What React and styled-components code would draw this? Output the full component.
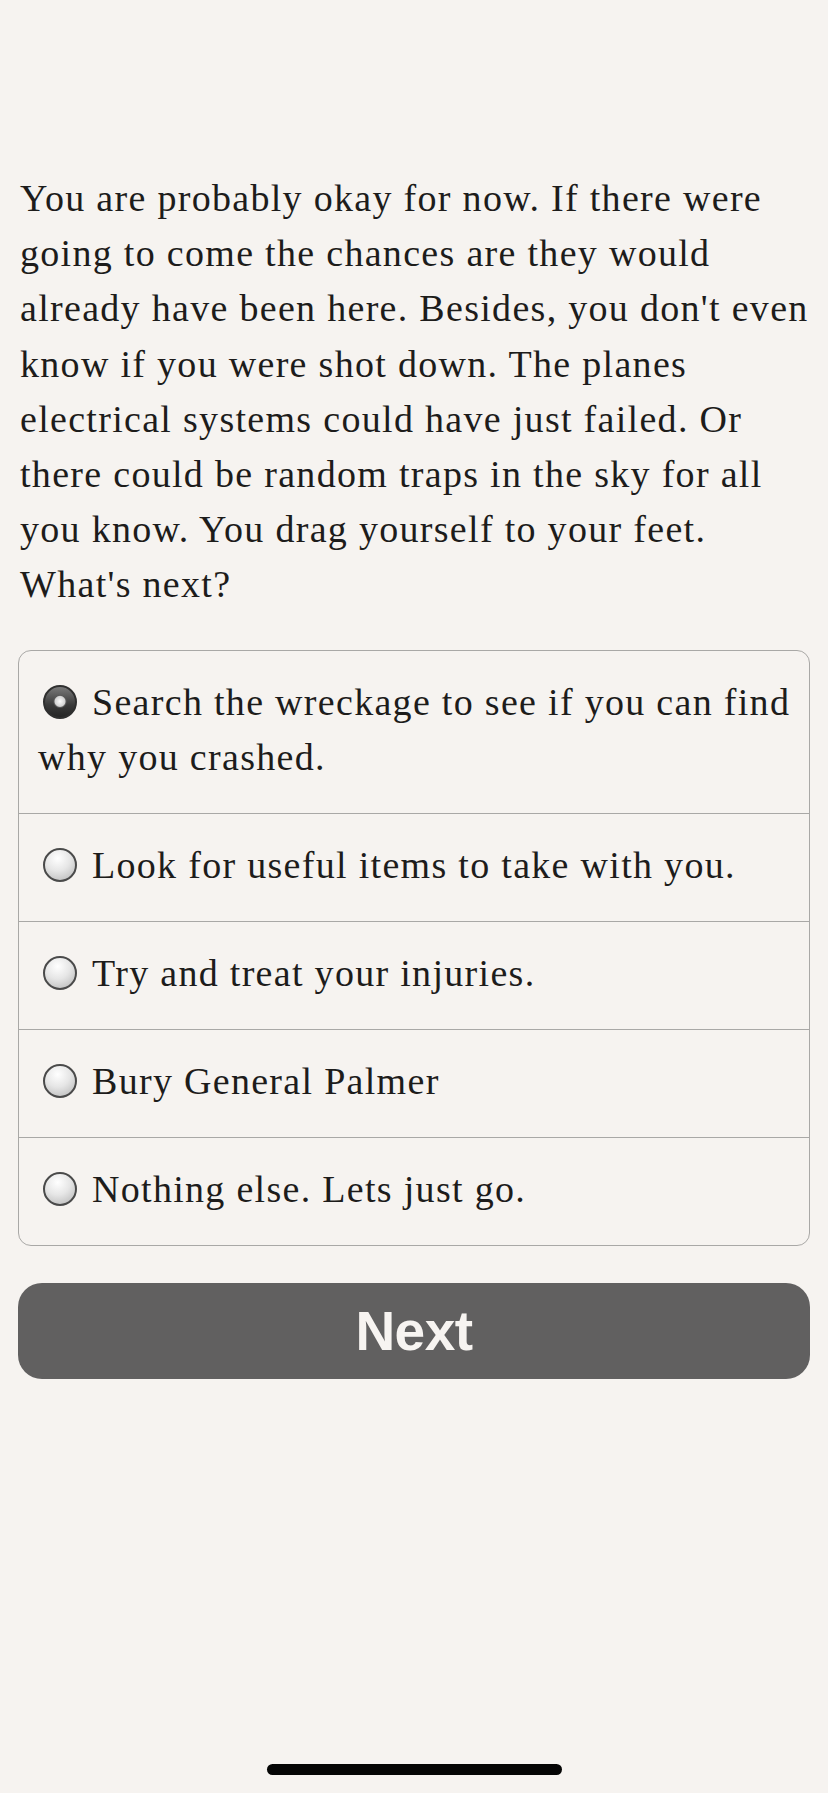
import React from "react";
import styled, { createGlobalStyle } from "styled-components";

const GlobalStyle = createGlobalStyle`
  html, body {
    margin: 0;
    padding: 0;
    background: #f6f3f0;
  }
  * { box-sizing: border-box; }
`;

const Screen = styled.div`
  min-height: 1793px;
  display: flex;
  flex-direction: column;
  padding: 0 18px;
  background: #f6f3f0;
  color: #1d1c1b;
  font-family: "Liberation Serif", "Times New Roman", serif;
`;

const Story = styled.p`
  margin: 171px 0 0 2px;
  font-size: 38px;
  line-height: 55.2px;
  letter-spacing: 1.3px;
`;

const Choices = styled.div`
  margin-top: 37px;
  border: 1.5px solid #a9a8a6;
  border-radius: 13px;
  overflow: hidden;
`;

const Choice = styled.label`
  display: block;
  padding: 24px 6px 28px 19px;
  font-size: 38px;
  line-height: 55px;
  letter-spacing: 1.3px;
  border-top: ${(p) => (p.$first ? "none" : "1.5px solid #a9a8a6")};
  cursor: pointer;
`;

const Radio = styled.input.attrs({ type: "radio" })`
  appearance: none;
  -webkit-appearance: none;
  display: inline-block;
  width: 34px;
  height: 34px;
  margin: 0 15px 0 5px;
  vertical-align: -4px;
  border-radius: 50%;
  border: 2px solid #4a4a4a;
  background: radial-gradient(circle at 42% 28%, #ffffff 0%, #e6e6e6 45%, #b3b3b3 100%);

  &:checked {
    border-color: #2f2f2f;
    background:
      radial-gradient(circle at 50% 48%, #fbfbfb 0, #d2d2d2 5px, #5a5a5a 6px, transparent 7px),
      linear-gradient(180deg, #7a7a7a 0%, #3a3a3a 60%, #252525 100%);
  }
`;

const NextButton = styled.button`
  margin-top: 37px;
  height: 96px;
  border: none;
  border-radius: 24px;
  background: #616060;
  color: #f7f4f1;
  font-family: "Liberation Sans", Arial, sans-serif;
  font-weight: 700;
  font-size: 55px;
  letter-spacing: -0.5px;
  cursor: pointer;
`;

const HomeIndicator = styled.div`
  margin: auto auto 18px;
  width: 295px;
  height: 11px;
  border-radius: 6px;
  background: #050505;
`;

const options = [
  "Search the wreckage to see if you can find why you crashed.",
  "Look for useful items to take with you.",
  "Try and treat your injuries.",
  "Bury General Palmer",
  "Nothing else. Lets just go.",
];

export default function App() {
  return (
    <>
      <GlobalStyle />
      <Screen>
        <Story>
          You are probably okay for now. If there were going to come the
          chances are they would already have been here. Besides, you don't
          even know if you were shot down. The planes electrical systems could
          have just failed. Or there could be random traps in the sky for all
          you know. You drag yourself to your feet. What's next?
        </Story>
        <Choices>
          {options.map((text, i) => (
            <Choice key={i} $first={i === 0}>
              <Radio name="choice" defaultChecked={i === 0} />
              {text}
            </Choice>
          ))}
        </Choices>
        <NextButton>Next</NextButton>
        <HomeIndicator />
      </Screen>
    </>
  );
}
